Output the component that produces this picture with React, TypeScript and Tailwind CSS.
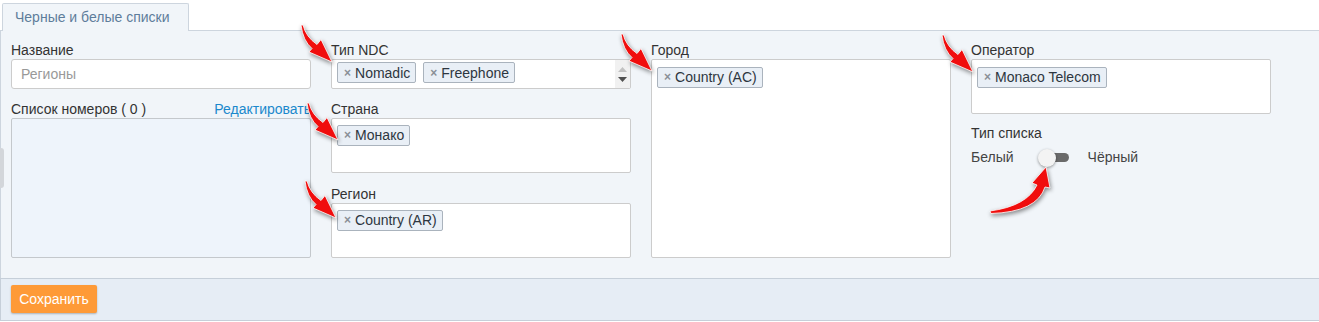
import React from 'react'

function Tag({ label }: { label: string }) {
  return (
    <span className="inline-flex items-center h-[21px] border border-[#aab3bd] bg-[#e9eff6] rounded-[2px] pl-[6px] pr-[5px] text-[#2d3640] leading-none shrink-0">
      <span className="text-[12px] font-bold text-[#8a8f96] mr-[4px]">×</span>
      {label}
    </span>
  )
}

function Label({ children }: { children: React.ReactNode }) {
  return <div className="leading-[17px] text-[#333]">{children}</div>
}

function RedArrow({ className }: { className: string }) {
  return (
    <svg viewBox="0 0 36 40" width="36" height="40" className={`absolute pointer-events-none drop-shadow-[1px_2px_2px_rgba(0,0,0,0.45)] ${className}`}>
      <path
        d="M1,1 Q3,17 12,24.5 L9,28 L32,38 L21,15.5 L17,20.5 Q6,13 3,1 Z"
        fill="#f00d0d"
        stroke="#ffffff"
        strokeWidth="0.8"
        strokeLinejoin="round"
      />
    </svg>
  )
}

export default function App() {
  return (
    <div className="relative w-[1319px] h-[322px] bg-white overflow-hidden text-[14px] font-['Liberation_Sans',Arial,sans-serif]">
      {/* Tab strip */}
      <div className="h-[30px] flex items-end pl-[2px]">
        <div className="relative z-10 -mb-px h-[28px] w-[187px] border border-b-0 border-[#cdd5de] bg-[#f1f5f9] rounded-t-[2px] flex items-center pl-[12px] text-[#5e7d9b]">
          Черные и белые списки
        </div>
      </div>

      {/* Form panel */}
      <div className="h-[248px] border-t border-l border-[#cdd5de] bg-[#f1f5f9] pt-[11px] pl-[10px] flex gap-[20px]">
        {/* Column 1 */}
        <div className="w-[300px] flex flex-col">
          <Label>Название</Label>
          <div className="h-[30px] border border-[#cccccc] rounded-[3px] bg-white px-[9px] flex items-center text-[#999]">
            Регионы
          </div>
          <div className="mt-[12px] flex justify-between leading-[17px]">
            <span className="text-[#333]">Список номеров ( 0 )</span>
            <span className="text-[#1b88cc]">Редактировать</span>
          </div>
          <div className="h-[140px] border border-[#c4c8cc] rounded-[2px] bg-[#eef4fb]" />
        </div>

        {/* Column 2 */}
        <div className="w-[300px] flex flex-col">
          <Label>Тип NDC</Label>
          <div className="h-[30px] border border-[#cccccc] rounded-[2px] bg-white flex">
            <div className="flex-1 flex items-start gap-[7px] pl-[5px] pt-[2px]">
              <Tag label="Nomadic" />
              <Tag label="Freephone" />
            </div>
            <div className="w-[15px] bg-[#f1f1f1] flex flex-col items-center justify-center gap-[5px]">
              <svg width="9" height="5" viewBox="0 0 9 5"><path d="M0 5 L4.5 0 L9 5 Z" fill="#c2c2c2" /></svg>
              <svg width="9" height="5" viewBox="0 0 9 5"><path d="M0 0 L4.5 5 L9 0 Z" fill="#505050" /></svg>
            </div>
          </div>
          <div className="mt-[12px]">
            <Label>Страна</Label>
          </div>
          <div className="h-[55px] border border-[#cccccc] rounded-[2px] bg-white pl-[5px] pt-[5px]">
            <Tag label="Монако" />
          </div>
          <div className="mt-[13px]">
            <Label>Регион</Label>
          </div>
          <div className="h-[55px] border border-[#cccccc] rounded-[2px] bg-white pl-[5px] pt-[5px]">
            <Tag label="Country (AR)" />
          </div>
        </div>

        {/* Column 3 */}
        <div className="w-[300px] flex flex-col">
          <Label>Город</Label>
          <div className="h-[199px] border border-[#cccccc] rounded-[2px] bg-white pl-[5px] pt-[6px]">
            <Tag label="Country (AC)" />
          </div>
        </div>

        {/* Column 4 */}
        <div className="w-[300px] flex flex-col">
          <Label>Оператор</Label>
          <div className="h-[55px] border border-[#cccccc] rounded-[2px] bg-white pl-[5px] pt-[6px]">
            <Tag label="Monaco Telecom" />
          </div>
          <div className="mt-[11px]">
            <Label>Тип списка</Label>
          </div>
          <div className="mt-[7px] h-[17px] flex items-center text-[#444]">
            <span className="leading-[17px]">Белый</span>
            <div className="relative ml-[24px] w-[31px] h-[18px]">
              <div className="absolute left-[6px] right-0 top-[4.5px] h-[9px] rounded-full bg-[#6a6a6a]" />
              <div className="absolute left-0 top-0 w-[18px] h-[18px] rounded-full bg-[#f3f3f3] shadow-[0_1px_3px_rgba(0,0,0,0.4)]" />
            </div>
            <span className="ml-[19px] leading-[17px]">Чёрный</span>
          </div>
        </div>
      </div>

      {/* Footer */}
      <div className="h-[43px] border-y border-l border-[#c6cfd9] bg-[#e6edf5] pl-[10px] pt-[6px]">
        <button className="h-[28px] w-[86px] rounded-[2px] bg-[#fe9a37] text-white shadow-[0_1px_2px_rgba(0,0,0,0.25)]">
          Сохранить
        </button>
      </div>

      {/* Collapse handle at left edge */}
      <div className="absolute left-0 top-[148px] w-[4px] h-[40px] rounded-r-[3px] bg-[#d3d6da]" />

      {/* Annotation arrows */}
      <RedArrow className="left-[300px] top-[24px]" />
      <RedArrow className="left-[306px] top-[102px]" />
      <RedArrow className="left-[304px] top-[180px]" />
      <RedArrow className="left-[620px] top-[33px]" />
      <RedArrow className="left-[941px] top-[34px]" />
      <svg viewBox="0 0 64 50" width="64" height="50" className="absolute pointer-events-none left-[989px] top-[166px] drop-shadow-[1px_2px_2px_rgba(0,0,0,0.45)]">
        <path
          d="M1,45 Q38,40 48,19 L43,17 L57,1 L61,22 L56,21 Q48,46 2,47.5 Z"
          fill="#f00d0d"
          stroke="#ffffff"
          strokeWidth="0.8"
          strokeLinejoin="round"
        />
      </svg>
    </div>
  )
}
